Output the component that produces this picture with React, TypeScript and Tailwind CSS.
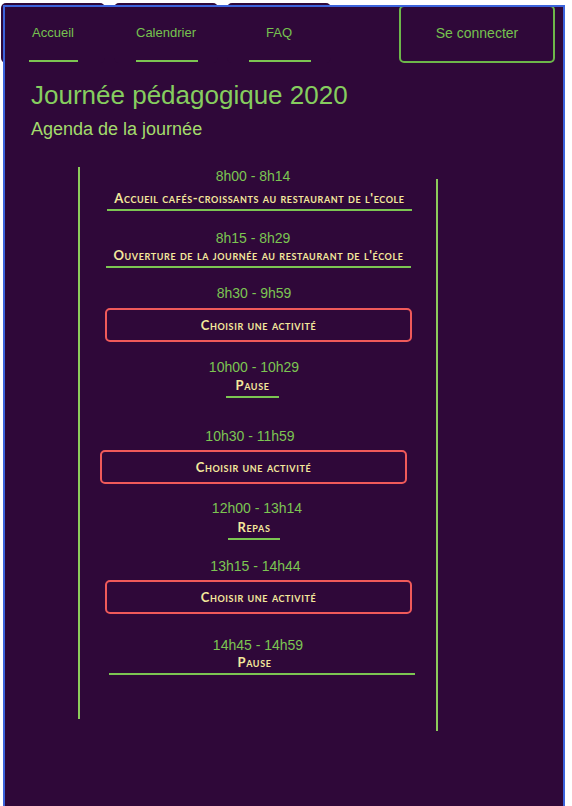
import React from 'react';

type Slot = {
    time: string;
    timeCls: string;
    kind: 'item' | 'button';
    label: string;
    cls: string;
    labelCls?: string;
};

const slots: Slot[] = [
    { time: '8h00 - 8h14', timeCls: 'mt-[2px] pr-[10px]', kind: 'item', label: "Accueil cafés-croissants au restaurant de l'ecole", cls: 'mt-[6px] ml-[27px] w-[305px]' },
    { time: '8h15 - 8h29', timeCls: 'mt-[20px] pr-[10px]', kind: 'item', label: "Ouverture de la journée au restaurant de l'école", cls: 'mt-[1px] ml-[26px] w-[305px]' },
    { time: '8h30 - 9h59', timeCls: 'mt-[18px] pr-[8px]', kind: 'button', label: 'Choisir une activité', cls: 'mt-[7px] ml-[25px]' },
    { time: '10h00 - 10h29', timeCls: 'mt-[18px] pr-[8px]', kind: 'item', label: 'Pause', cls: 'mt-[2px] ml-[146px] w-[53px]' },
    { time: '10h30 - 11h59', timeCls: 'mt-[31px] pr-[16px]', kind: 'button', label: 'Choisir une activité', cls: 'mt-[6px] ml-[20px]' },
    { time: '12h00 - 13h14', timeCls: 'mt-[17px] pr-[2px]', kind: 'item', label: 'Repas', cls: 'mt-[3px] ml-[148px] w-[52px]' },
    { time: '13h15 - 14h44', timeCls: 'mt-[19px] pr-[5px]', kind: 'button', label: 'Choisir une activité', cls: 'mt-[6px] ml-[25px]' },
    { time: '14h45 - 14h59', timeCls: 'mt-[24px]', kind: 'item', label: 'Pause', cls: 'mt-[1px] ml-[29px] w-[306px]', labelCls: 'pr-[15px]' },
];

const navLinks = [
    { label: 'Accueil', line: 'w-[49px] ml-[1px]' },
    { label: 'Calendrier', line: 'w-[62px] ml-[1px]' },
    { label: 'FAQ', line: 'w-[62px] ml-[1px]' },
];

const sans = "font-['Liberation_Sans',Arial,sans-serif]";
const caps = "font-['Lato','Open_Sans',sans-serif] font-bold [font-variant:small-caps] tracking-[0.6px] text-[13px] leading-[16px] text-[#f4e89c]";

export default function App() {
    return (
        <div className={`min-h-[806px] bg-white pt-[7px] ${sans}`}>
            <div className="ml-[5px] w-[558px] min-h-[799px] flex flex-col bg-[#2f0839] outline-2 outline-[#3c64dc]">
                {/* Nav */}
                <div className="flex items-start -mt-[4px] -ml-[4px]">
                    <div className="flex gap-[9px]">
                        {navLinks.map((l) => (
                            <a
                                key={l.label}
                                className="w-[104px] h-[60px] rounded-[5px] bg-[#2f0839] flex flex-col items-center pt-[22px]"
                            >
                                <span className="text-[13px] leading-[15px] text-[#76c24f]">{l.label}</span>
                                <span className={`mt-[20px] h-[2px] bg-[#7cc552] ${l.line}`} />
                            </a>
                        ))}
                    </div>
                    <button className="ml-auto mr-[8px] mt-[2px] w-[156px] h-[58px] border-2 border-[#6db64a] rounded-[5px] flex items-center justify-center pb-[2px] text-[14px] leading-[16px] text-[#76c24f]">
                        Se connecter
                    </button>
                </div>

                {/* Title */}
                <div className="pl-[26px] mt-[17px]">
                    <h1 className="text-[26px] leading-[30px] text-[#86cd5f]">Journée pédagogique 2020</h1>
                    <h2 className="mt-[8px] text-[18px] leading-[22px] text-[#a3db6c]">Agenda de la journée</h2>
                </div>

                {/* Timeline */}
                <div className="flex items-start ml-[73px] mt-[27px]">
                    <div className="w-[2px] h-[552px] bg-[#8ccb5b]" />
                    <div className="w-[356px] flex flex-col">
                        {slots.map((s, i) => (
                            <React.Fragment key={i}>
                                <div className={`text-center text-[14px] leading-[15px] text-[#7cc552] ${s.timeCls}`}>
                                    {s.time}
                                </div>
                                {s.kind === 'item' ? (
                                    <div className={`self-start pb-[3px] border-b-2 border-[#7cc552] text-center ${caps} ${s.cls}`}>
                                        <span className={`block ${s.labelCls ?? ''}`}>{s.label}</span>
                                    </div>
                                ) : (
                                    <button className={`self-start w-[307px] h-[34px] border-2 border-[#f05a5a] rounded-[5px] flex items-center justify-center ${caps} ${s.cls}`}>
                                        {s.label}
                                    </button>
                                )}
                            </React.Fragment>
                        ))}
                    </div>
                    <div className="w-[2px] h-[552px] mt-[12px] bg-[#8ccb5b]" />
                </div>
            </div>
        </div>
    );
}
